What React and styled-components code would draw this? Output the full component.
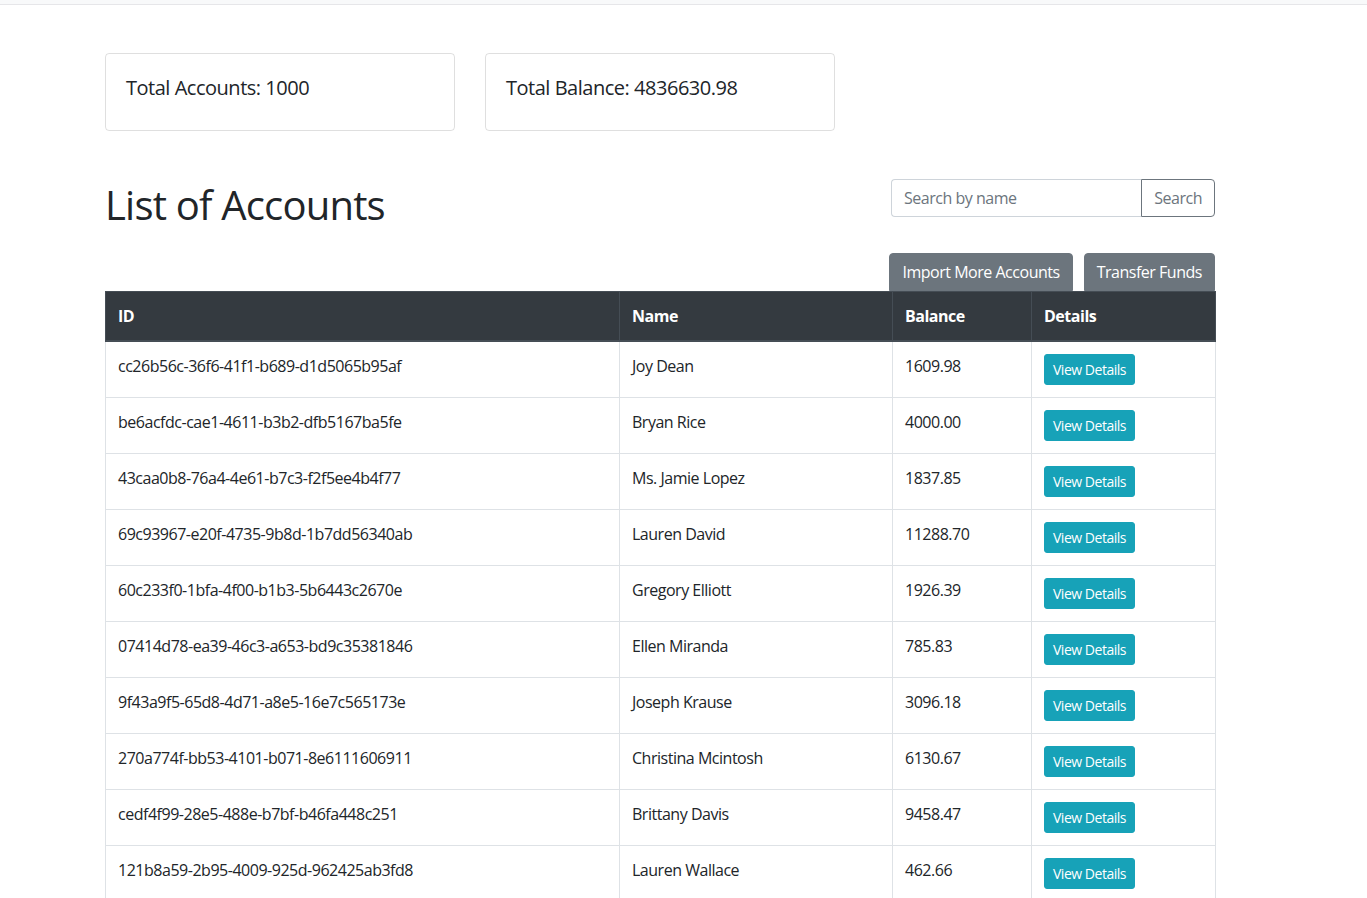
import React from 'react';
import styled, { createGlobalStyle } from 'styled-components';

const GlobalStyle = createGlobalStyle`
    html, body {
        margin: 0;
        padding: 0;
        overflow: hidden;
        background: #fff;
    }
    body {
        font-family: 'Open Sans', 'Noto Sans', sans-serif;
        font-size: 16px;
        line-height: 1.5;
        letter-spacing: -0.03em;
        color: #212529;
    }
    * {
        box-sizing: border-box;
    }
`;

const TopBar = styled.div`
    height: 5px;
    background: #f8f9fa;
    border-bottom: 1px solid #e6e6e9;
`;

const Container = styled.div`
    width: 1110px;
    margin-left: 105px;
`;

const StatsRow = styled.div`
    display: flex;
    gap: 30px;
    margin-top: 48px;
`;

const StatCard = styled.div`
    width: 350px;
    border: 1px solid rgba(0, 0, 0, 0.125);
    border-radius: 4px;
    padding: 22px 20px 30px;
`;

const StatTitle = styled.h5`
    margin: 0;
    font-size: 20px;
    font-weight: 400;
    line-height: 1.2;
    letter-spacing: inherit;
`;

const HeaderRow = styled.div`
    display: flex;
    justify-content: space-between;
    align-items: flex-start;
    margin-top: 48px;
`;

const Title = styled.h1`
    margin: 2px 0 0;
    font-size: 40px;
    font-weight: 400;
    line-height: 1.2;
    letter-spacing: -0.02em;
`;

const SearchGroup = styled.div`
    display: flex;
    width: 324px;
    height: 38px;
`;

const SearchInput = styled.input`
    flex: 1;
    min-width: 0;
    height: 38px;
    padding: 6px 12px;
    font-family: inherit;
    font-size: 16px;
    letter-spacing: inherit;
    color: #495057;
    border: 1px solid #ced4da;
    border-right: none;
    border-radius: 4px 0 0 4px;
    outline: none;

    &::placeholder {
        color: #6c757d;
    }
`;

const SearchButton = styled.button`
    height: 38px;
    padding: 6px 12px;
    font-family: inherit;
    font-size: 16px;
    letter-spacing: inherit;
    line-height: 1.5;
    color: #6c757d;
    background: transparent;
    border: 1px solid #6c757d;
    border-radius: 0 4px 4px 0;
`;

const ActionRow = styled.div`
    display: flex;
    justify-content: flex-end;
    gap: 11px;
    margin-top: 24px;
`;

const Button = styled.button`
    font-family: inherit;
    letter-spacing: inherit;
    color: #fff;
    border: 1px solid ${p => p.$color};
    background: ${p => p.$color};
    font-size: ${p => (p.$small ? '14px' : '16px')};
    line-height: 1.5;
    padding: ${p => (p.$small ? '4px 8px' : '6px 12px')};
    border-radius: ${p => (p.$small ? '3px' : '4px')};
    ${p => (p.$flatBottom ? 'border-bottom-left-radius: 0; border-bottom-right-radius: 0;' : '')}
`;

const Table = styled.table`
    width: 1110px;
    border-collapse: collapse;
    table-layout: fixed;

    th,
    td {
        padding: 12px;
        text-align: left;
        vertical-align: top;
        border: 1px solid #dee2e6;
    }

    thead th {
        background: #343a40;
        color: #fff;
        font-weight: 700;
        border-color: #454d55;
        border-bottom-width: 2px;
    }
`;

const accounts = [
    ['cc26b56c-36f6-41f1-b689-d1d5065b95af', 'Joy Dean', '1609.98'],
    ['be6acfdc-cae1-4611-b3b2-dfb5167ba5fe', 'Bryan Rice', '4000.00'],
    ['43caa0b8-76a4-4e61-b7c3-f2f5ee4b4f77', 'Ms. Jamie Lopez', '1837.85'],
    ['69c93967-e20f-4735-9b8d-1b7dd56340ab', 'Lauren David', '11288.70'],
    ['60c233f0-1bfa-4f00-b1b3-5b6443c2670e', 'Gregory Elliott', '1926.39'],
    ['07414d78-ea39-46c3-a653-bd9c35381846', 'Ellen Miranda', '785.83'],
    ['9f43a9f5-65d8-4d71-a8e5-16e7c565173e', 'Joseph Krause', '3096.18'],
    ['270a774f-bb53-4101-b071-8e6111606911', 'Christina Mcintosh', '6130.67'],
    ['cedf4f99-28e5-488e-b7bf-b46fa448c251', 'Brittany Davis', '9458.47'],
    ['121b8a59-2b95-4009-925d-962425ab3fd8', 'Lauren Wallace', '462.66'],
];

const App = () => {
    return (
        <>
            <GlobalStyle />
            <TopBar />
            <Container>
                <StatsRow>
                    <StatCard>
                        <StatTitle>Total Accounts: 1000</StatTitle>
                    </StatCard>
                    <StatCard>
                        <StatTitle>Total Balance: 4836630.98</StatTitle>
                    </StatCard>
                </StatsRow>

                <HeaderRow>
                    <Title>List of Accounts</Title>
                    <SearchGroup>
                        <SearchInput placeholder="Search by name" />
                        <SearchButton>Search</SearchButton>
                    </SearchGroup>
                </HeaderRow>

                <ActionRow>
                    <Button $color="#6c757d" $flatBottom>Import More Accounts</Button>
                    <Button $color="#6c757d" $flatBottom>Transfer Funds</Button>
                </ActionRow>

                <Table>
                    <colgroup>
                        <col style={{ width: 514 }} />
                        <col style={{ width: 273 }} />
                        <col style={{ width: 139 }} />
                        <col style={{ width: 184 }} />
                    </colgroup>
                    <thead>
                        <tr>
                            <th>ID</th>
                            <th>Name</th>
                            <th>Balance</th>
                            <th>Details</th>
                        </tr>
                    </thead>
                    <tbody>
                        {accounts.map(([id, name, balance]) => (
                            <tr key={id}>
                                <td>{id}</td>
                                <td>{name}</td>
                                <td>{balance}</td>
                                <td>
                                    <Button $color="#17a2b8" $small>View Details</Button>
                                </td>
                            </tr>
                        ))}
                    </tbody>
                </Table>
            </Container>
        </>
    );
};

export default App;
